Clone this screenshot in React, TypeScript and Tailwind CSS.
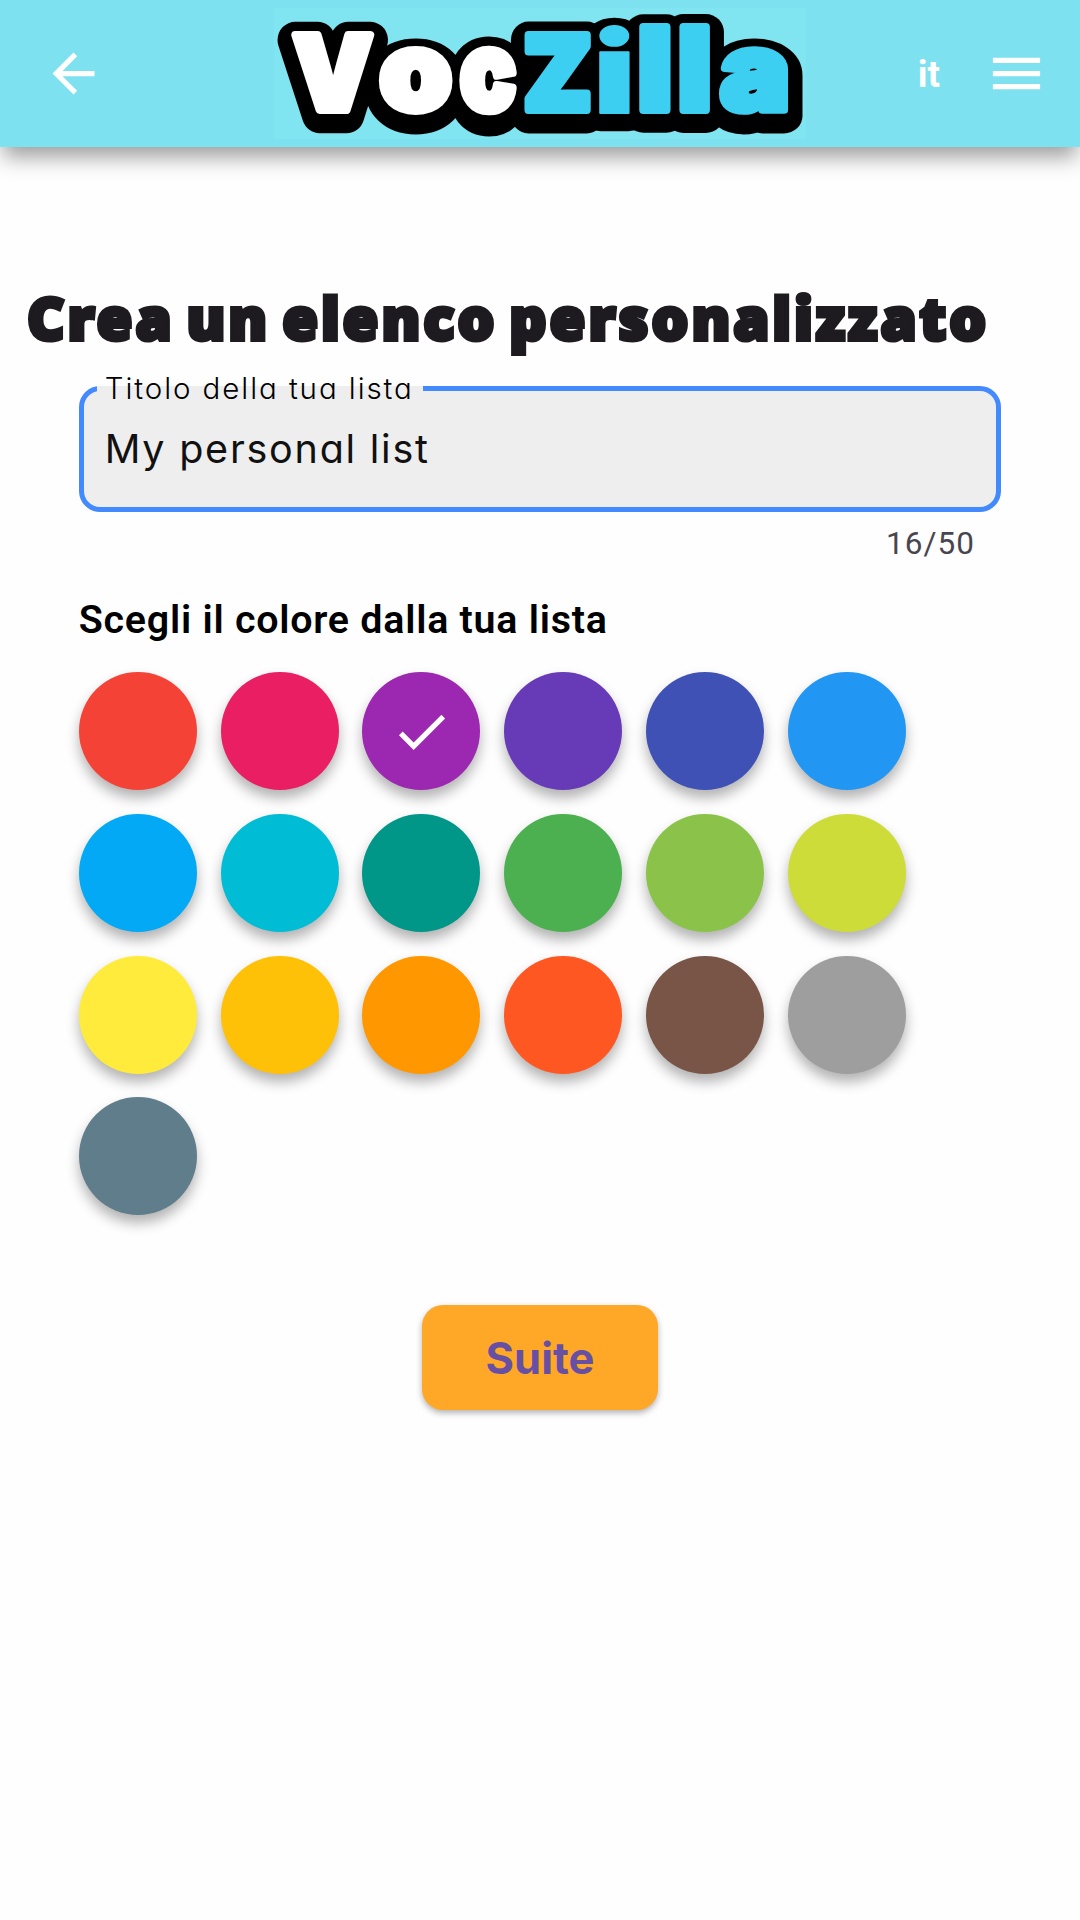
import { MdArrowBack, MdCheck, MdMenu } from "react-icons/md";

type Glyph = { ch: string; t: string };

const VOC: Glyph[] = [
  { ch: "V", t: "translate(293 109.7) scale(1 1.03)" },
  { ch: "o", t: "translate(379.5 110) scale(1.158 1.09)" },
  { ch: "c", t: "translate(460.2 110) scale(.92 1.09)" },
];

const ZILLA: Glyph[] = [
  { ch: "Z", t: "translate(523.4 109.7) scale(.984 1.03)" },
  { ch: "i", t: "translate(593.3 112.7) scale(1.43 1.127)" },
  { ch: "l", t: "translate(637.6 109.7) scale(1.176 1.137)" },
  { ch: "l", t: "translate(677.7 109.7) scale(1.143 1.137)" },
  { ch: "a", t: "translate(720.2 110) scale(1.165 1.09)" },
];

function Letters({ id, glyphs }: { id: string; glyphs: Glyph[] }) {
  return (
    <g id={id}>
      {glyphs.map((g, i) => (
        <text
          key={i}
          transform={g.t}
          className={
            g.ch === "i"
              ? "[stroke-width:var(--thin)] [vector-effect:non-scaling-stroke]"
              : "[stroke-width:var(--wide)] [vector-effect:non-scaling-stroke]"
          }
        >
          {g.ch}
        </text>
      ))}
    </g>
  );
}

function Logo() {
  return (
    <svg
      viewBox="274 8 532 131"
      role="img"
      aria-label="VocZilla"
      className="h-[131px] w-[532px] bg-[#80e5f0] font-['Inter',sans-serif] text-[100px] font-black"
      strokeLinejoin="round"
    >
      <defs>
        <Letters id="voc" glyphs={VOC} />
        <Letters id="zilla" glyphs={ZILLA} />
      </defs>
      <g transform="translate(0 5.5)" className="fill-black stroke-black [--thin:30px] [--wide:36px]">
        <use href="#voc" />
        <use href="#zilla" />
        <rect x="400" y="60" width="30" height="40" stroke="none" />
      </g>
      <g className="[--thin:2px] [--wide:8px]">
        <use href="#voc" className="fill-white stroke-white" />
        <use href="#zilla" className="fill-[#3dcff2] stroke-[#3dcff2]" />
      </g>
    </svg>
  );
}

const SWATCHES = [
  "bg-[#f44336]", "bg-[#e91e63]", "bg-[#9c27b0]", "bg-[#673ab7]", "bg-[#3f51b5]", "bg-[#2196f3]",
  "bg-[#03a9f4]", "bg-[#00bcd4]", "bg-[#009688]", "bg-[#4caf50]", "bg-[#8bc34a]", "bg-[#cddc39]",
  "bg-[#ffeb3b]", "bg-[#ffc107]", "bg-[#ff9800]", "bg-[#ff5722]", "bg-[#795548]", "bg-[#9e9e9e]",
  "bg-[#607d8b]",
];
const SELECTED = 2;

export default function App() {
  return (
    <div className="min-h-[1920px] w-full overflow-hidden bg-[#fefefe] font-['Roboto',sans-serif]">
      <header className="grid h-[147px] grid-cols-[274px_532px_274px] items-center bg-[#7de1f0] text-white shadow-[0_13px_20px_-3px_rgba(0,0,0,0.38)]">
        <button className="ml-[42px] w-[63px]" aria-label="Indietro">
          <MdArrowBack className="size-[63px]" />
        </button>
        <Logo />
        <div className="flex items-center justify-end pr-[32px]">
          <span className="mt-[3px] mr-[45px] text-[36.75px] leading-none font-bold">it</span>
          <button aria-label="Menu">
            <MdMenu className="size-[63px]" />
          </button>
        </div>
      </header>

      <main>
        <h1 className="mt-[133px] ml-[27px] text-[58px] leading-[76px] font-black tracking-[2.95px] whitespace-nowrap text-[#1d1b20] font-['Noto_Sans',sans-serif] [-webkit-text-stroke:4px_#1d1b20] [word-spacing:-6px]">
          Crea un elenco personalizzato
        </h1>

        <section className="mt-[30px] mr-[79px] ml-[78.75px]">
          <div className="relative h-[126px] rounded-[21px] border-[5.25px] border-[#448aff] bg-[#eeeeee] font-['Inter',sans-serif] [font-feature-settings:'cv11']">
            <span className="absolute -top-[5.25px] left-[13px] h-[6px] w-[326px] bg-[#eeeeee]" />
            <label className="absolute -top-[22px] left-[21px] text-[29.5px] leading-[38px] font-[350] tracking-[1.93px] whitespace-nowrap text-black">
              Titolo della tua lista
            </label>
            <div className="pt-[33px] pl-[21px] text-[39.5px] leading-[50px] font-[370] tracking-[1.75px] text-[#111]">
              My personal list
            </div>
          </div>
          <p className="mt-[13px] pr-[26px] text-right text-[31.5px] leading-[38px] tracking-[1.05px] text-[#49454f]">
            16/50
          </p>

          <h2 className="mt-[34px] text-[39.4px] leading-[46px] font-semibold tracking-[0.75px] text-black">
            Scegli il colore dalla tua lista
          </h2>
          <div className="mt-[29px] flex flex-wrap gap-[23.625px]">
            {SWATCHES.map((color, i) => (
              <button
                key={color}
                className={`flex size-[118.125px] items-center justify-center rounded-full text-white shadow-[0_8px_13px_rgba(0,0,0,0.3)] ${color}`}
              >
                {i === SELECTED && <MdCheck className="size-[63px]" />}
              </button>
            ))}
          </div>
        </section>

        <div className="mt-[90px] flex justify-center">
          <button className="h-[105px] w-[236px] rounded-[21px] bg-[#ffa726] pt-px text-[43.5px] font-bold text-[#6750a4] shadow-[0_3px_6px_rgba(0,0,0,0.3)] font-['Inter',sans-serif]">
            Suite
          </button>
        </div>
      </main>
    </div>
  );
}
